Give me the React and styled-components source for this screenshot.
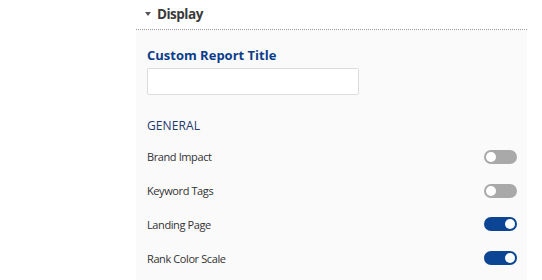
import React from "react";
import styled, { createGlobalStyle } from "styled-components";

const Global = createGlobalStyle`
  html, body { margin: 0; padding: 0; background: #ffffff; }
  body { font-family: "Open Sans", "Noto Sans", sans-serif; }
`;

const Page = styled.div`
  width: 542px;
  height: 280px;
  overflow: hidden;
  padding-left: 136px;
  box-sizing: border-box;
`;

const Section = styled.div`
  width: 391px;
`;

const Header = styled.div`
  height: 30px;
  display: flex;
  align-items: center;
  gap: 6px;
  padding-left: 9px;
  padding-bottom: 2px;
  box-sizing: border-box;
  border-bottom: 1px dotted #9a9a9a;
  font-size: 13.5px;
  font-weight: 700;
  letter-spacing: -0.5px;
  color: #3a3a3a;
`;

const Caret = styled.span`
  width: 0;
  height: 0;
  border-left: 3.5px solid transparent;
  border-right: 3.5px solid transparent;
  border-top: 4px solid #555;
  margin-top: 1px;
`;

const Panel = styled.div`
  background: #fafafa;
  padding: 16px 10px 0 11px;
  height: 260px;
  box-sizing: border-box;
`;

const Title = styled.div`
  font-size: 13px;
  font-weight: 700;
  color: #0b3d8c;
  line-height: 18px;
`;

const Input = styled.input`
  display: block;
  margin-top: 4px;
  width: 212px;
  height: 27px;
  box-sizing: border-box;
  border: 1px solid #dcdcdc;
  border-radius: 2px;
  background: #fff;
  outline: none;
`;

const Group = styled.div`
  margin-top: 23px;
  font-size: 12px;
  color: #1e3a6e;
  line-height: 16px;
  letter-spacing: 0.1px;
`;

const List = styled.div`
  margin-top: 6px;
  display: flex;
  flex-direction: column;
`;

const Row = styled.div`
  height: 33.8px;
  display: flex;
  align-items: center;
  justify-content: space-between;
`;

const Label = styled.span`
  font-size: 11px;
  letter-spacing: -0.4px;
  color: #333;
`;

const Toggle = styled.span`
  position: relative;
  width: 33px;
  height: 14px;
  border-radius: 7px;
  background: ${(p) => (p.$on ? "#0b4593" : "#a9a9a9")};
  flex: none;
  &::after {
    content: "";
    position: absolute;
    top: 2px;
    left: ${(p) => (p.$on ? "21px" : "2px")};
    width: 10px;
    height: 10px;
    border-radius: 50%;
    background: #fff;
  }
`;

const items = [
  ["Brand Impact", false],
  ["Keyword Tags", false],
  ["Landing Page", true],
  ["Rank Color Scale", true],
];

export default function App() {
  return (
    <Page>
      <Global />
      <Section>
        <Header>
          <Caret />
          Display
        </Header>
        <Panel>
          <Title>Custom Report Title</Title>
          <Input type="text" />
          <Group>GENERAL</Group>
          <List>
            {items.map(([label, on]) => (
              <Row key={label}>
                <Label>{label}</Label>
                <Toggle $on={on} />
              </Row>
            ))}
          </List>
        </Panel>
      </Section>
    </Page>
  );
}
